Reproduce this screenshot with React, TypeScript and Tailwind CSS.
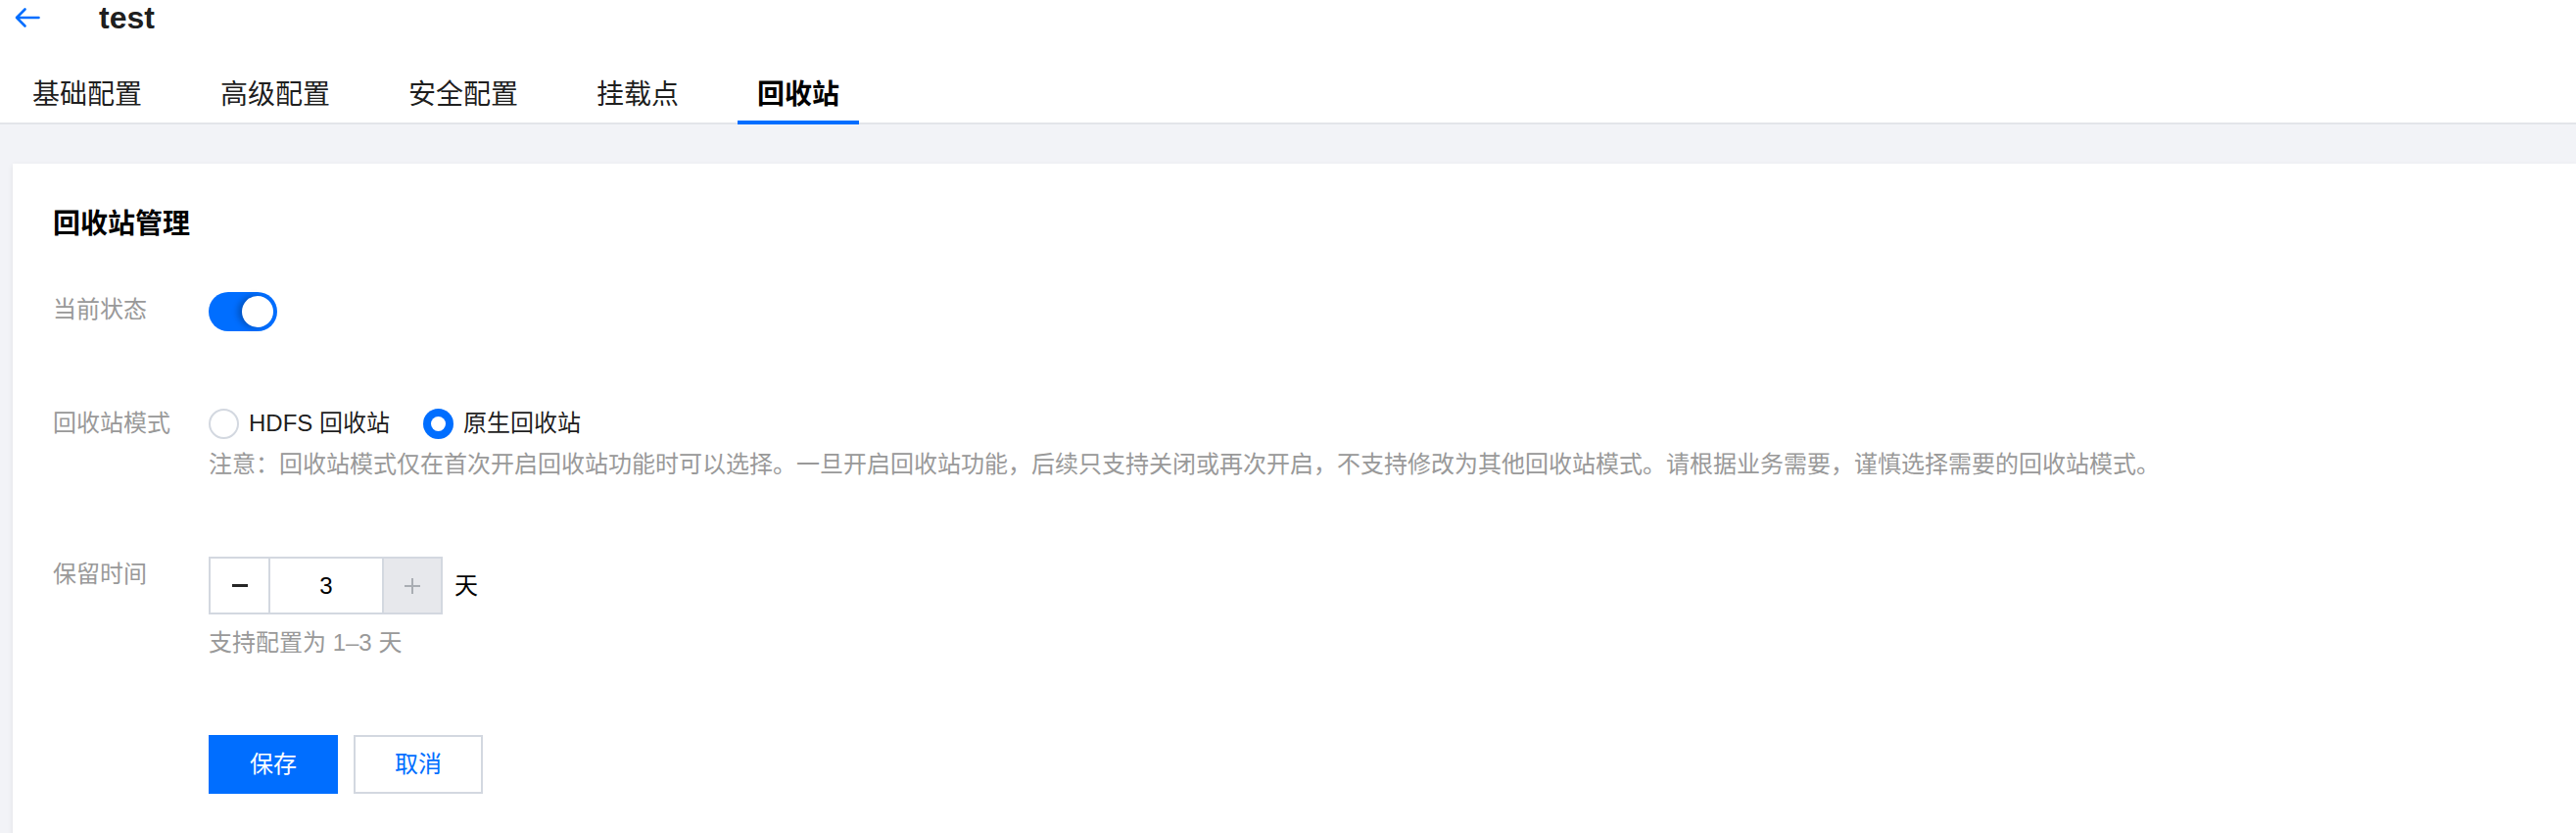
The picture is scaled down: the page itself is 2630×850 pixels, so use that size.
import { useState } from "react";

const tabs = ["基础配置", "高级配置", "安全配置", "挂载点", "回收站"];

const FONT = {
  fontFamily: '"Liberation Sans", "Noto Sans CJK SC", sans-serif',
};

function BackArrow() {
  return (
    <svg width="27" height="22" viewBox="0 0 27 22" fill="none">
      <path
        d="M25.5 11H3M11.5 2.5L3 11l8.5 8.5"
        stroke="#006eff"
        strokeWidth="2.6"
        strokeLinecap="round"
        strokeLinejoin="round"
      />
    </svg>
  );
}

function Radio({ checked, label, onClick }: { checked: boolean; label: string; onClick: () => void }) {
  return (
    <button type="button" onClick={onClick} className="flex items-center gap-[10px]">
      {checked ? (
        <span className="flex h-[31px] w-[31px] items-center justify-center rounded-full bg-[#006eff]">
          <span className="h-[15px] w-[15px] rounded-full bg-white" />
        </span>
      ) : (
        <span className="h-[31px] w-[31px] rounded-full border-2 border-[#d3d8e0] bg-white" />
      )}
      <span className="text-[24px] leading-[36px] text-[rgba(0,0,0,0.9)]">{label}</span>
    </button>
  );
}

function FormRow({ label, children }: { label: string; children: React.ReactNode }) {
  return (
    <div className="flex items-start">
      <div className="w-[159px] shrink-0 text-[24px] leading-[36px] text-[#999]">{label}</div>
      <div className="flex-1">{children}</div>
    </div>
  );
}

export default function App() {
  const [enabled, setEnabled] = useState(true);
  const [mode, setMode] = useState<"hdfs" | "native">("native");
  const [days, setDays] = useState(3);

  return (
    <div className="min-h-[850px] w-full overflow-hidden bg-[#f2f3f7]" style={FONT}>
      {/* page header: back link, instance name, tabs */}
      <header className="border-b-2 border-[#e3e5e9] bg-white">
        <div className="flex h-9 items-center gap-[60px] pl-[14px]">
          <BackArrow />
          <h1 className="text-[32px] font-bold leading-9 text-[rgba(0,0,0,0.9)]">test</h1>
        </div>
        <nav className="mt-8 flex h-[57px] items-stretch gap-10 pl-[13px]">
          {tabs.map((tab, i) => {
            const active = i === tabs.length - 1;
            return (
              <div
                key={tab}
                className={`relative flex items-center px-5 text-[28px] ${
                  active ? "font-semibold text-black" : "text-[rgba(0,0,0,0.9)]"
                }`}
              >
                {tab}
                {active && <span className="absolute -bottom-[2px] left-0 right-0 h-1 bg-[#006eff]" />}
              </div>
            );
          })}
        </nav>
      </header>

      {/* recycle bin settings card */}
      <section className="ml-[13px] mt-10 bg-white pb-[60px] pl-[41px] pt-[41px] shadow-[0_2px_6px_rgba(0,0,0,0.08)]">
        <h2 className="text-[28px] font-bold leading-[42px] text-black">回收站管理</h2>

        <div className="mt-12">
          <FormRow label="当前状态">
            <button
              type="button"
              onClick={() => setEnabled(!enabled)}
              className={`flex h-10 w-[70px] items-center rounded-full px-1 ${
                enabled ? "justify-end bg-[#006eff]" : "justify-start bg-[#c5c9d0]"
              }`}
            >
              <span className="h-8 w-8 rounded-full bg-white shadow-[-4px_0_6px_rgba(0,0,0,0.25)]" />
            </button>
          </FormRow>
        </div>

        <div className="mt-[76px]">
          <FormRow label="回收站模式">
            <div className="flex h-9 items-center gap-[34px]">
              <Radio checked={mode === "hdfs"} label="HDFS 回收站" onClick={() => setMode("hdfs")} />
              <Radio checked={mode === "native"} label="原生回收站" onClick={() => setMode("native")} />
            </div>
            <p className="mt-[6px] text-[24px] leading-[36px] text-[#999]">
              注意：回收站模式仅在首次开启回收站功能时可以选择。一旦开启回收站功能，后续只支持关闭或再次开启，不支持修改为其他回收站模式。请根据业务需要，谨慎选择需要的回收站模式。
            </p>
          </FormRow>
        </div>

        <div className="mt-[76px]">
          <FormRow label="保留时间">
            <div className="flex items-center gap-3">
              <div className="flex h-[59px] border-2 border-[#d3d8e0]">
                <button
                  type="button"
                  onClick={() => setDays(Math.max(1, days - 1))}
                  className="flex w-[59px] items-center justify-center bg-white"
                >
                  <span className="h-[3px] w-4 bg-[rgba(0,0,0,0.85)]" />
                </button>
                <div className="flex w-[118px] items-center justify-center border-x-2 border-[#d3d8e0] text-[24px] text-black">
                  {days}
                </div>
                <button
                  type="button"
                  disabled={days >= 3}
                  onClick={() => setDays(Math.min(3, days + 1))}
                  className="relative flex w-[58px] items-center justify-center bg-[#e7e8ec]"
                >
                  <span className="absolute h-[2px] w-4 bg-[#a9adb3]" />
                  <span className="absolute h-4 w-[2px] bg-[#a9adb3]" />
                </button>
              </div>
              <span className="text-[24px] text-black">天</span>
            </div>
            <p className="mt-[11px] text-[24px] leading-[36px] text-[#999]">支持配置为 1–3 天</p>
          </FormRow>
        </div>

        <div className="mt-[76px] flex gap-4 pl-[159px]">
          <button type="button" className="h-[60px] w-[132px] bg-[#006eff] text-[24px] text-white">
            保存
          </button>
          <button
            type="button"
            className="h-[60px] w-[132px] border-2 border-[#d3d8e0] bg-white text-[24px] text-[#006eff]"
          >
            取消
          </button>
        </div>
      </section>
    </div>
  );
}
